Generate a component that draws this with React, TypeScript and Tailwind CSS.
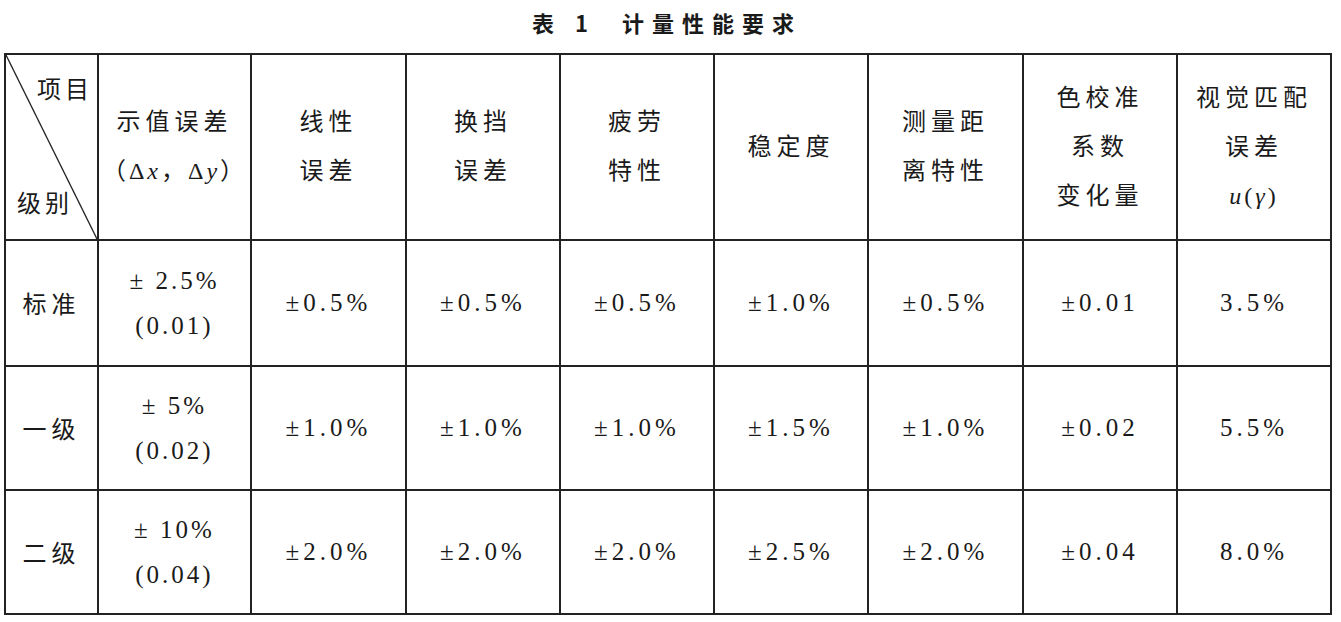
import React from 'react'

const cols = [93, 153, 155, 154, 154, 154, 155, 154, 154]

const heads: React.ReactNode[][] = [
  [<>示值误差</>, <span className="tracking-[3px] whitespace-nowrap">（Δ<i>x</i>，Δ<i>y</i>）</span>],
  [<>线性</>, <>误差</>],
  [<>换挡</>, <>误差</>],
  [<>疲劳</>, <>特性</>],
  [<>稳定度</>],
  [<>测量距</>, <>离特性</>],
  [<>色校准</>, <>系数</>, <>变化量</>],
  [<>视觉匹配</>, <>误差</>, <span className="tracking-[3px]"><i>u</i>(<i>γ</i>)</span>],
]

const rows = [
  { name: '标准', h: 'h-[126px]', first: ['± 2.5%', '(0.01)'], vals: ['±0.5%', '±0.5%', '±0.5%', '±1.0%', '±0.5%', '±0.01', '3.5%'] },
  { name: '一级', h: 'h-[124px]', first: ['± 5%', '(0.02)'], vals: ['±1.0%', '±1.0%', '±1.0%', '±1.5%', '±1.0%', '±0.02', '5.5%'] },
  { name: '二级', h: 'h-[124px]', first: ['± 10%', '(0.04)'], vals: ['±2.0%', '±2.0%', '±2.0%', '±2.5%', '±2.0%', '±0.04', '8.0%'] },
]

export default function App() {
  return (
    <div className="w-[1341px] h-[622px] bg-white text-[#1a1a1a] font-['Liberation_Serif','Noto_Sans_CJK_SC',serif]">
      {/* Title */}
      <div className="pt-[7px] h-[53px] w-[1326px] ml-[4px] text-center">
        <h1 className="text-[22px] font-bold tracking-[8px] font-['Noto_Sans_CJK_SC',sans-serif] leading-[30px]">
          表 1<span className="inline-block w-[26px]" />计量性能要求
        </h1>
      </div>

      {/* Table */}
      <table className="ml-[4px] table-fixed border-collapse border-2 border-[#111]">
        <colgroup>
          {cols.map((w, i) => (
            <col key={i} style={{ width: w }} />
          ))}
        </colgroup>
        <thead>
          <tr className="h-[186px]">
            <th className="relative p-0 border-2 border-[#222] font-normal">
              <svg className="absolute inset-0 w-full h-full" preserveAspectRatio="none" viewBox="0 0 100 100">
                <line x1="0" y1="0" x2="100" y2="100" stroke="#222" strokeWidth="1.3" vectorEffect="non-scaling-stroke" />
              </svg>
              <span className="absolute right-[4px] top-[15px] text-[24px] tracking-[4px] font-['Noto_Sans_CJK_SC',sans-serif]">项目</span>
              <span className="absolute left-[11px] bottom-[19px] text-[24px] tracking-[4px] font-['Noto_Sans_CJK_SC',sans-serif]">级别</span>
            </th>
            {heads.map((lines, i) => (
              <th key={i} className="p-0 border-2 border-[#222] font-normal text-[24px] tracking-[5px] leading-[49px] align-middle">
                {lines.map((l, j) => (
                  <div key={j}>{l}</div>
                ))}
              </th>
            ))}
          </tr>
        </thead>
        <tbody>
          {rows.map(r => (
            <tr key={r.name} className={r.h}>
              <td className="p-0 border-2 border-[#222] text-center text-[24px] tracking-[5px] font-['Noto_Sans_CJK_SC',sans-serif]">
                {r.name}
              </td>
              <td className="p-0 border-2 border-[#222] text-center text-[25px] tracking-[3px] leading-[45px]">
                <div>{r.first[0]}</div>
                <div>{r.first[1]}</div>
              </td>
              {r.vals.map((v, i) => (
                <td key={i} className="p-0 border-2 border-[#222] text-center text-[25px] tracking-[4px]">
                  {v}
                </td>
              ))}
            </tr>
          ))}
        </tbody>
      </table>
    </div>
  )
}
